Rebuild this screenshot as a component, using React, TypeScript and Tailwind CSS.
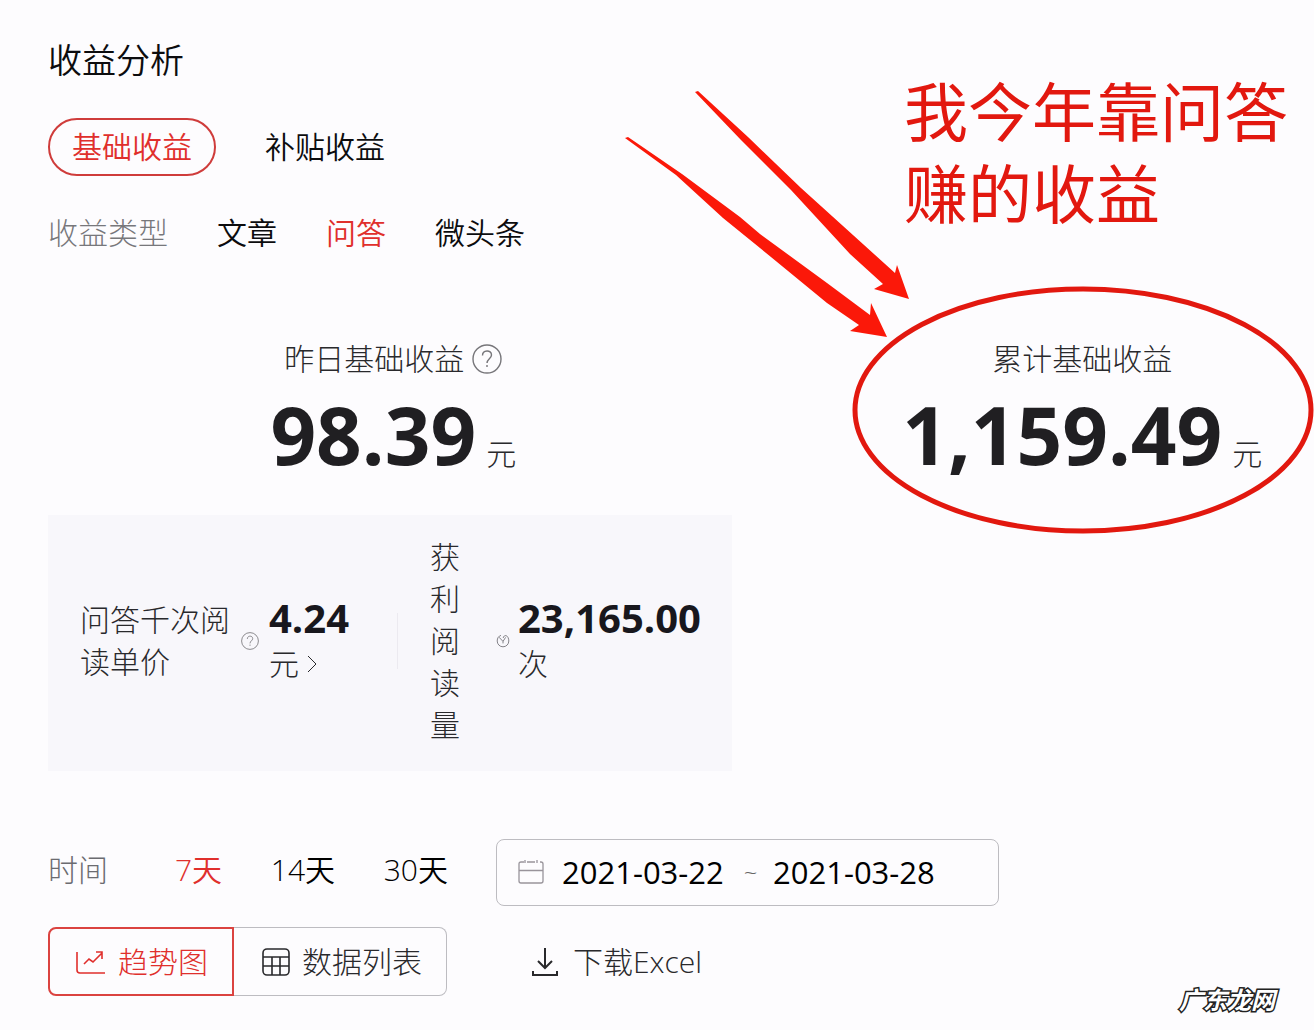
import type { ReactNode } from "react";

const incomeTypes = ["文章", "问答", "微头条"];
const ranges = ["7天", "14天", "30天"];

export default function IncomeAnalysis() {
  return (
    <main className="relative min-h-screen overflow-hidden bg-[#fdfcfe] pt-[39px] pb-[34px] pl-12 font-['Open_Sans','Noto_Sans_CJK_SC',sans-serif] text-[30px] leading-[42px] font-[350] text-[#0c0c0e]">
      <h1 className="text-[34px]">收益分析</h1>

      <div className="mt-[37px] flex items-center gap-[49px]">
        <button className="h-[58px] rounded-full border-2 border-[#cf3c3b] px-[22px] text-[#e02f2c]">
          基础收益
        </button>
        <button>补贴收益</button>
      </div>

      <div className="mt-9 flex gap-[49px]">
        <span className="font-light text-[#77777b]">收益类型</span>
        {incomeTypes.map((type) => (
          <button key={type} className={type === "问答" ? "text-[#e02f2c]" : ""}>
            {type}
          </button>
        ))}
      </div>

      <section className="mt-[84px] grid grid-cols-[6fr_5fr]">
        <Stat label="昨日基础收益" value="98.39">
          <HelpIcon className="size-[30px]" />
        </Stat>
        <div className="pl-28">
          <Stat label="累计基础收益" value="1,159.49" />
        </div>
      </section>

      <section className="mt-10 flex w-[54%] items-center bg-[#f8f7fb] pt-[21px] pb-[25px] pl-8 font-light text-[#29292c]">
        <span className="w-[150px] shrink-0">问答千次阅读单价</span>
        <HelpIcon className="ml-[11px] size-[18px] shrink-0" />
        <div className="ml-2.5 w-32 shrink-0">
          <b className="mb-1 block text-[40px] font-bold text-[#18171d]">4.24</b>
          <a href="#price" className="flex items-center gap-2">
            元
            <svg viewBox="0 0 10 18" className="h-[18px] w-2.5 fill-none stroke-current">
              <path d="m1 1 8 8-8 8" />
            </svg>
          </a>
        </div>
        <div className="h-14 w-px shrink-0 bg-[#eceaf0]" />
        <span className="ml-8 w-[30px] shrink-0">获利阅读量</span>
        <svg
          viewBox="0 0 14 14"
          className="ml-9 size-3.5 shrink-0 fill-none stroke-[#77767c] stroke-[0.9]"
        >
          <path d="M5 1.400C2.600 2 1.200 4.100 1.200 7c0 3.300 2.600 5.800 5.800 5.800s5.800-2.500 5.800-5.800c0-2.500-1-4.700-2.600-5.300C8.800 1.200 7.500 2.200 7.200 4" />
          <path d="m3 3.200 4 4.200 2.600-4M7 7.400v2" />
        </svg>
        <div className="ml-2">
          <b className="mb-1 block text-[40px] font-bold text-[#18171d]">23,165.00</b>
          次
        </div>
      </section>

      <section className="mt-[68px] flex items-center">
        <span className="pb-1.5 font-light text-[#6b6b70]">时间</span>
        <div className="ml-[67px] flex w-[273px] justify-between pb-1.5">
          {ranges.map((range) => (
            <button key={range} className={range === "7天" ? "text-[#e02f2c]" : "text-black"}>
              {range}
            </button>
          ))}
        </div>
        <div className="ml-12 flex h-[67px] w-[503px] items-center rounded-lg border border-[#bdbcc1] pb-0.5 pl-[21px]">
          <svg viewBox="0 0 26 24" className="h-6 w-[26px] fill-none stroke-[#99949b] stroke-[1.3]">
            <path d="M6 2H3Q1 2 1 4v17q0 2 2 2h20q2 0 2-2V4q0-2-2-2h-1M9 2h8M1 10.500h24M7 0v3M19 0v3" />
          </svg>
          <input
            aria-label="开始日期"
            defaultValue="2021-03-22"
            className="ml-[18px] w-[166px] text-[31px] font-normal text-black outline-none"
          />
          <span className="w-[45px] text-center text-2xl text-[#666]">~</span>
          <input
            aria-label="结束日期"
            defaultValue="2021-03-28"
            className="w-[166px] text-[31px] font-normal text-black outline-none"
          />
        </div>
      </section>

      <div className="mt-[21px] flex items-center font-light text-[#29292c]">
        <button className="flex h-[69px] w-[186px] items-center justify-center gap-3 rounded-l-lg border-2 border-[#db4340] pl-0.5 text-[#e02f2c]">
          <svg viewBox="0 0 30 24" className="h-6 w-[30px] fill-none stroke-current stroke-[1.600]">
            <path d="M1 2v18q0 3 3 3h25M8 14l5-5 4 3 9-9M20 2h6v7" />
          </svg>
          趋势图
        </button>
        <button className="flex h-[69px] w-[213px] items-center justify-center gap-3 rounded-r-lg border border-l-0 border-[#bdbcc1] pl-1">
          <svg viewBox="0 0 28 28" className="size-7 fill-none stroke-current stroke-[1.600]">
            <rect x="1" y="1" width="26" height="26" rx="4" />
            <path d="M1 9h26M1 18h26M10 9v18M18 9v18" />
          </svg>
          数据列表
        </button>
        <button className="ml-[84px] flex items-center gap-3.5">
          <svg viewBox="0 0 28 28" className="size-7 fill-none stroke-current stroke-2">
            <path d="M14 0v20M7 13l7 7 7-7M2 23v4h24v-4" />
          </svg>
          下载Excel
        </button>
      </div>

      <Annotation />

      <span className="absolute right-[39px] bottom-3 text-2xl leading-9 font-bold text-white italic [-webkit-text-stroke:3px_#222] [paint-order:stroke]">
        广东龙网
      </span>
    </main>
  );
}

function Stat({ label, value, children }: { label: string; value: string; children?: ReactNode }) {
  return (
    <div className="flex flex-col items-center font-light text-[#29292c]">
      <div className="flex items-center gap-2">
        {label}
        {children}
      </div>
      <div className="mt-[13px] flex items-baseline gap-2.5">
        <b className="text-[80px] leading-[82px] font-bold text-[#201f22]">{value}</b>
        <span>元</span>
      </div>
    </div>
  );
}

function HelpIcon({ className }: { className: string }) {
  return (
    <svg viewBox="0 0 30 30" className={`${className} fill-none stroke-[#77767a] stroke-[1.400]`}>
      <circle cx="15" cy="15" r="14" />
      <path d="M10.500 11.500c0-6 9-6 9-.5 0 3.500-4.500 4-4.500 8" />
      <path d="M15 21v2" />
    </svg>
  );
}

// Hand-drawn style callout pinned to the right edge, over the total
function Annotation() {
  return (
    <div className="pointer-events-none absolute top-0 right-0 h-[550px] w-[714px]">
      <svg viewBox="600 0 714 550" className="size-full">
        <g fill="#fb1809">
          <path d="M695 92 698 91 748 137 801 188 895 273 897 265 909 299 874 289 883 284 850 254 791 190 741 140Z" />
          <path d="M625 138 628 137 682 174 740 217 760 234 827 283 870 315 871 303 887 337 850 331 859 325 827 303 760 248 723 218 676 175Z" />
        </g>
        <ellipse cx="1083" cy="410" rx="228" ry="121" fill="none" stroke="#e2180f" strokeWidth="5" />
      </svg>
      <p className="absolute top-[71px] right-[23px] w-[387px] text-[64px] leading-[82px] font-normal text-[#e2180f]">
        我今年靠问答赚的收益
      </p>
    </div>
  );
}
